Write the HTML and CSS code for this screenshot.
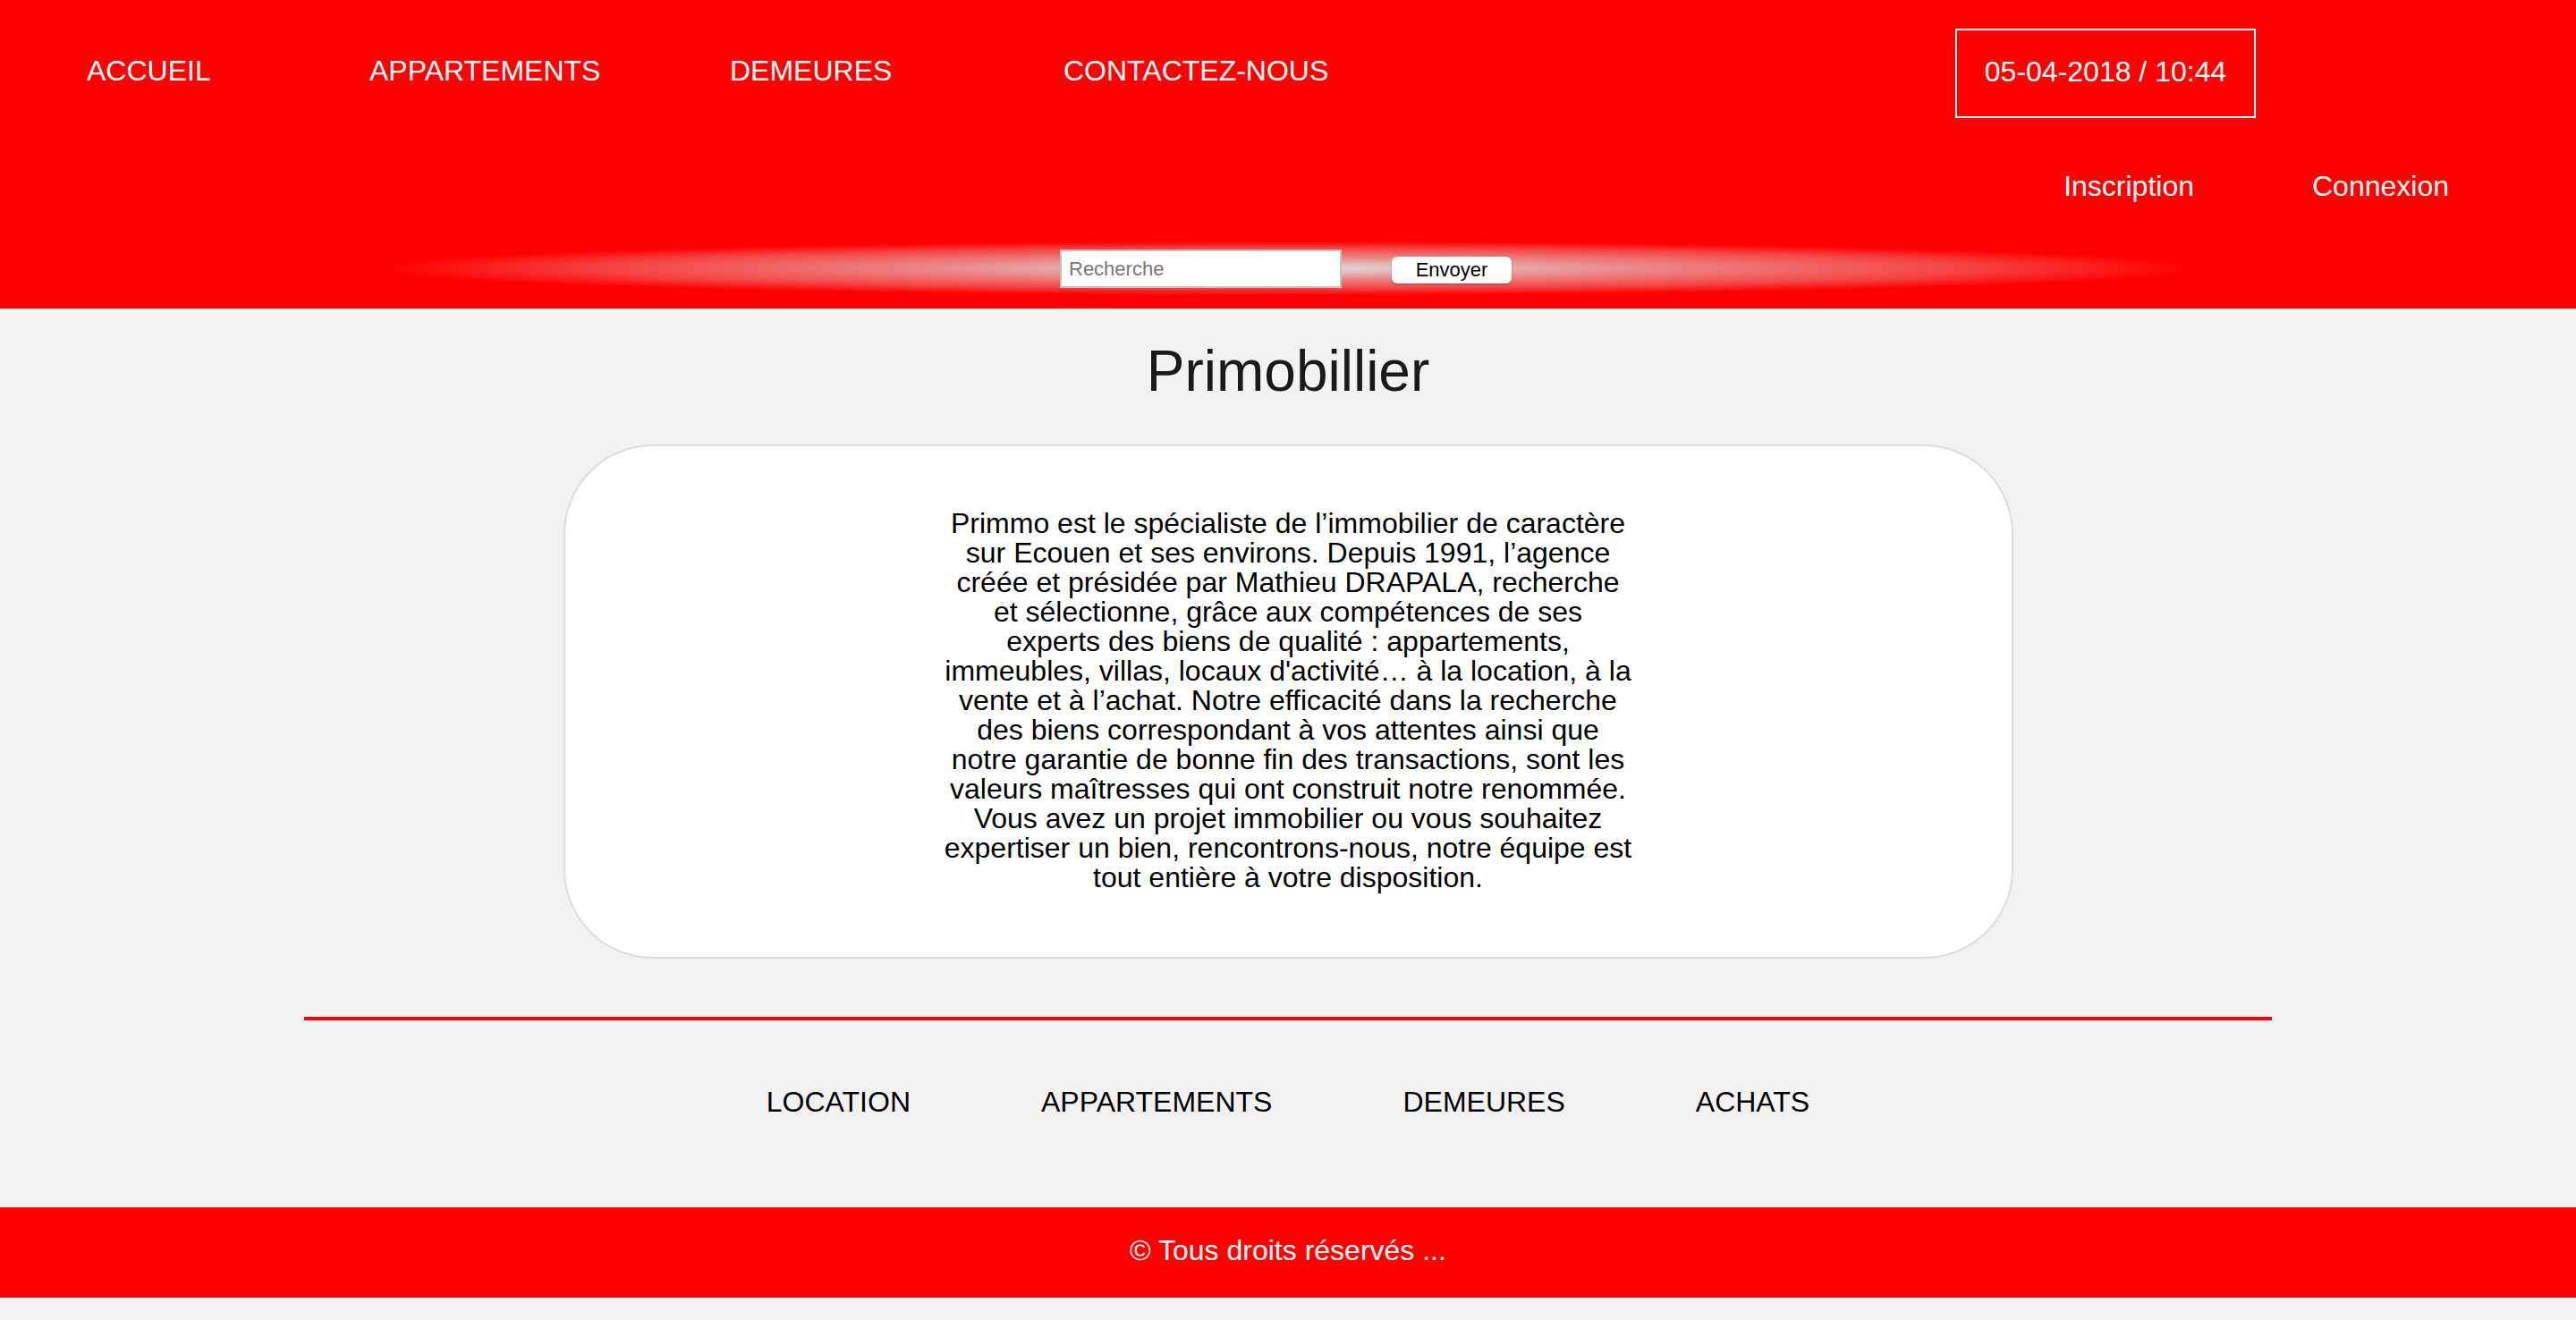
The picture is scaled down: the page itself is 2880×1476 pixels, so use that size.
FILE: index.html
```html
<!DOCTYPE html>
<html lang="fr">
<head>
<meta charset="utf-8">
<title>Primobillier</title>
<link rel="stylesheet" href="styles.css">
</head>
<body>
<header class="site-header">
  <div class="top-row">
    <nav class="main-nav">
      <a href="#">ACCUEIL</a>
      <a href="#">APPARTEMENTS</a>
      <a href="#">DEMEURES</a>
      <a href="#">CONTACTEZ-NOUS</a>
    </nav>
    <div class="datebox">05-04-2018 / 10:44</div>
  </div>
  <div class="account-row">
    <a href="#">Inscription</a>
    <a href="#">Connexion</a>
  </div>
  <form class="search-row">
    <input class="search-input" type="text" placeholder="Recherche">
    <button class="search-btn" type="button">Envoyer</button>
  </form>
</header>

<main class="content">
  <h1 class="title">Primobillier</h1>
  <section class="card">
    <p class="intro">Primmo est le spécialiste de l’immobilier de caractère sur Ecouen et ses environs. Depuis 1991, l’agence créée et présidée par Mathieu DRAPALA, recherche et sélectionne, grâce aux compétences de ses experts des biens de qualité : appartements, immeubles, villas, locaux d'activité… à la location, à la vente et à l’achat. Notre efficacité dans la recherche des biens correspondant à vos attentes ainsi que notre garantie de bonne fin des transactions, sont les valeurs maîtresses qui ont construit notre renommée. Vous avez un projet immobilier ou vous souhaitez expertiser un bien, rencontrons-nous, notre équipe est tout entière à votre disposition.</p>
  </section>
  <div class="divider"></div>
  <nav class="footer-nav">
    <a href="#">LOCATION</a>
    <a href="#">APPARTEMENTS</a>
    <a href="#">DEMEURES</a>
    <a href="#">ACHATS</a>
  </nav>
</main>

<footer class="site-footer">© Tous droits réservés ...</footer>
</body>
</html>
```

FILE: styles.css
```css
* { box-sizing: border-box; }

html, body {
  margin: 0;
  padding: 0;
}

body {
  background: #f2f2f2;
  font-family: "Liberation Sans", Arial, Helvetica, sans-serif;
  color: #000;
  padding-bottom: 25px;
}

a { text-decoration: none; }

/* ---------- header ---------- */
.site-header {
  background: #ff0000;
  height: 345px;
  padding-top: 32px;
}

.top-row {
  display: flex;
  align-items: center;
  height: 100px;
}

.main-nav {
  display: grid;
  grid-template-columns: 316px 403px 373px auto;
  padding-left: 97px;
  margin-top: -6px;
}

.main-nav a {
  color: #fff;
  font-size: 32px;
  line-height: 37px;
}

.datebox {
  margin-left: auto;
  margin-right: 358px;
  width: 336px;
  height: 100px;
  border: 2px solid #fff;
  color: #fff;
  font-size: 32px;
  display: flex;
  align-items: center;
  justify-content: center;
  padding-bottom: 3px;
}

.account-row {
  display: flex;
  justify-content: flex-end;
  gap: 132px;
  padding-right: 142px;
  margin-top: 58px;
}

.account-row a {
  color: #fff;
  font-size: 32px;
  line-height: 37px;
}

.search-row {
  width: 2028px;
  height: 60px;
  margin: 43px auto 0;
  display: flex;
  align-items: center;
  justify-content: center;
  gap: 56px;
  padding-right: 5px;
  background: radial-gradient(ellipse closest-side at center,
    rgba(222, 222, 222, 1) 0%,
    rgba(222, 222, 222, 0.85) 15%,
    rgba(222, 222, 222, 0.6) 40%,
    rgba(222, 222, 222, 0.3) 75%,
    rgba(222, 222, 222, 0) 100%);
}

.search-input {
  width: 315px;
  height: 43px;
  border: 2px solid #c2c2c2;
  background: #fff;
  padding: 2px 8px 0;
  font-family: "Liberation Sans", Arial, sans-serif;
  font-size: 22px;
  color: #333;
  margin: 0;
  outline: none;
}

.search-input::placeholder { color: #777; }

.search-btn {
  width: 134px;
  height: 30px;
  margin: 3px 0 0;
  border: none;
  border-radius: 6px;
  background: #fff;
  box-shadow: 0 1px 2px rgba(0, 0, 0, 0.3);
  font-family: "Liberation Sans", Arial, sans-serif;
  font-size: 22px;
  color: #000;
  padding: 0;
}

/* ---------- main ---------- */
.title {
  margin: 33px 0 45px;
  text-align: center;
  font-size: 64px;
  line-height: 74px;
  font-weight: 300;
  color: #1a1a1a;
}

.card {
  width: 1621px;
  margin: 0 auto;
  background: #fff;
  border: 2px solid #dddddd;
  border-radius: 100px;
  padding: 70px 0 72px;
}

.intro {
  width: 771px;
  margin: 0 auto;
  text-align: center;
  font-size: 32px;
  line-height: 33px;
  color: #000;
}

.divider {
  width: 2200px;
  height: 4px;
  background: #ff0000;
  margin: 65px auto 0;
}

.footer-nav {
  display: flex;
  justify-content: center;
  gap: 146px;
  margin-top: 73px;
}

.footer-nav a {
  color: #000;
  font-size: 32px;
  line-height: 37px;
}

/* ---------- footer ---------- */
.site-footer {
  margin-top: 99px;
  height: 101px;
  background: #ff0000;
  color: #fff;
  font-size: 32px;
  display: flex;
  align-items: center;
  justify-content: center;
  padding-bottom: 4px;
}
```
